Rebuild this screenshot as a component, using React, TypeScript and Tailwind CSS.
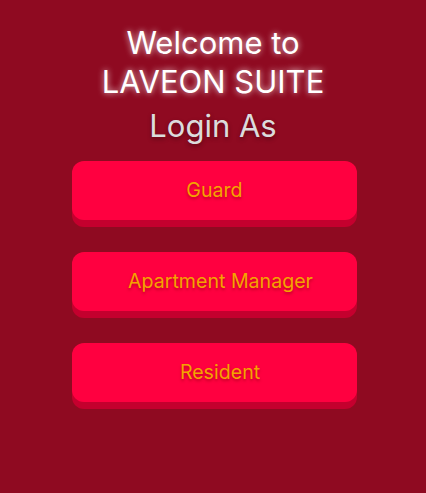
export default function App() {
  const roles = [
    { label: "Guard", pad: "" },
    { label: "Apartment Manager", pad: "pl-[12px]" },
    { label: "Resident", pad: "pl-[11px]" },
  ];

  return (
    <div className="min-h-[493px] w-full bg-[#8f0a21] flex flex-col items-center pt-[23px] font-['Inter',sans-serif]">
      <h1 className="text-[31px] leading-[39px] text-center text-white [text-shadow:0_0_6px_rgba(255,255,255,0.8)]">
        Welcome to
        <br />
        LAVEON SUITE
      </h1>
      <h2 className="mt-[7px] text-[31px] leading-[36px] text-[#dcdcdc] [text-shadow:0_2px_4px_rgba(0,0,0,0.35)]">
        Login As
      </h2>
      <div className="mt-[17px] ml-[3px] flex flex-col gap-[32px]">
        {roles.map((role) => (
          <button
            key={role.label}
            className={
              "w-[285px] h-[59px] rounded-[12px] bg-[#ff0040] text-[19.6px] text-[#f5a300] shadow-[0_7px_0_#c4002e] [text-shadow:0_2px_3px_rgba(120,0,0,0.45)] " +
              role.pad
            }
          >
            {role.label}
          </button>
        ))}
      </div>
    </div>
  );
}
